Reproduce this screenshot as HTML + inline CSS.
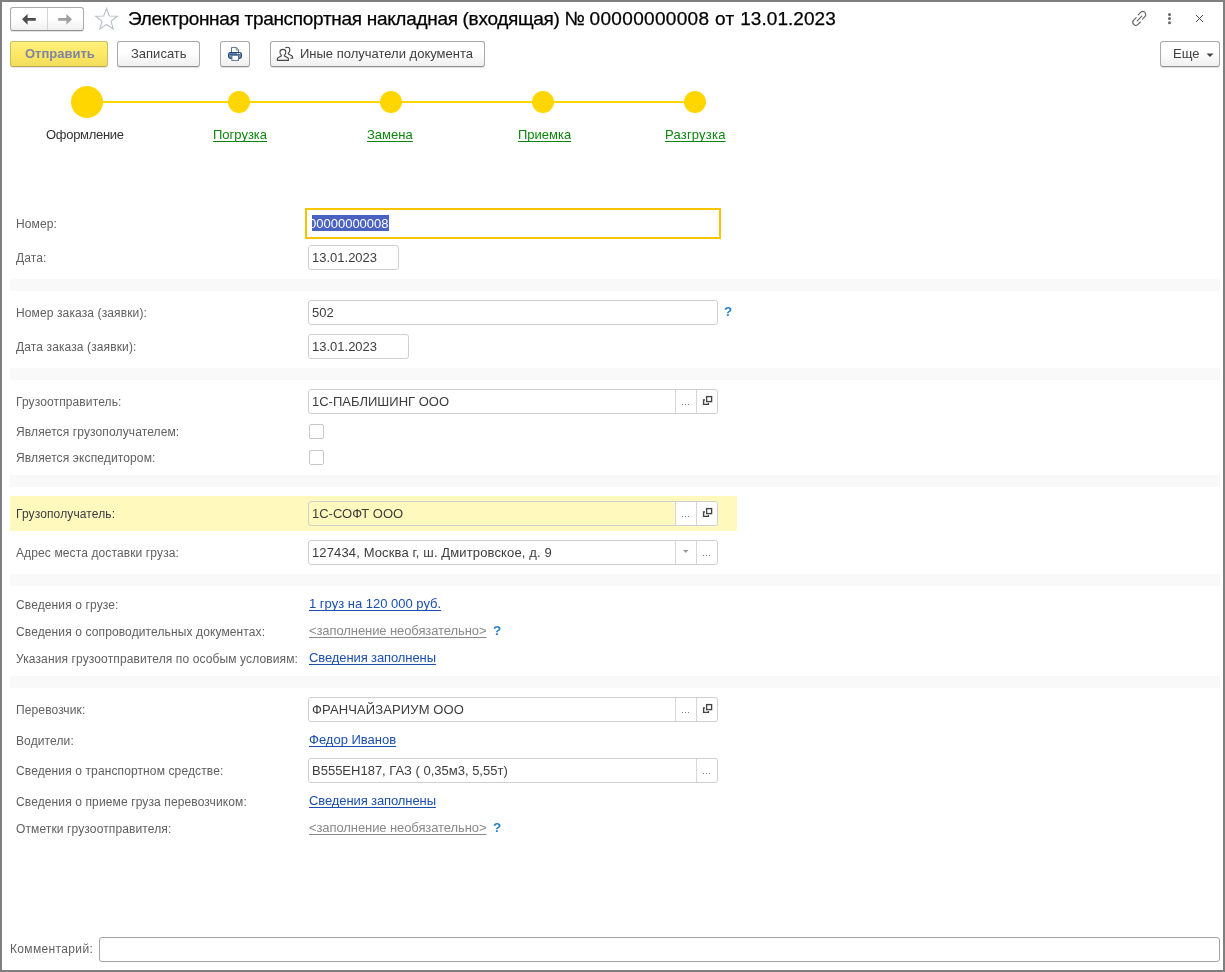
<!DOCTYPE html>
<html><head><meta charset="utf-8">
<style>
*{box-sizing:border-box;margin:0;padding:0}
html,body{width:1225px;height:972px;overflow:hidden;background:#fff}
body{will-change:transform}
body{position:relative;font-family:"Liberation Sans",sans-serif;color:#4d4d4d}
.a{position:absolute}
.frame{position:absolute;left:0;top:0;width:1225px;height:972px;border:2px solid #7f7f7f;pointer-events:none}
.t12{position:absolute;font-size:12px;line-height:14px;white-space:nowrap;color:#606060;letter-spacing:0.12px}
.t13{position:absolute;font-size:13px;line-height:15px;white-space:nowrap;color:#3d3d3d}
.lnk{color:#1a4fae;text-decoration:underline;text-decoration-skip-ink:none;text-underline-offset:2.4px}
.gl{color:#8a8a8a;text-decoration:underline;text-decoration-skip-ink:none;text-underline-offset:2.4px;letter-spacing:-0.09px}
.green{color:#0d850d;text-decoration:underline;text-decoration-skip-ink:none;text-underline-offset:2.4px}
.band{position:absolute;left:10px;width:1210px;height:12px;background:#f9f9f9}
.fld{position:absolute;border:1px solid #cfcfcf;border-radius:3px;background:#fff}
.btn{position:absolute;top:41px;height:26px;border:1px solid #a9a9a9;border-bottom-color:#8f8f8f;border-radius:3px;background:linear-gradient(#fff 0%,#fff 45%,#efefef 100%);box-shadow:0 1px 0 rgba(0,0,0,0.12)}
.btxt{position:absolute;font-size:13px;line-height:15px;white-space:nowrap;color:#404040}
.q{position:absolute;font-size:13.5px;line-height:16px;font-weight:bold;color:#2a80c6}
.cb{position:absolute;width:15px;height:15px;border:1px solid #c8c8c8;border-radius:2px;background:#fff}
.sb{position:absolute;top:0;bottom:0;border-left:1px solid #d6d6d6}
.dots{position:absolute;font-size:11px;line-height:11px;color:#8a8a8a;letter-spacing:0px}
</style></head><body>

<!-- header nav -->
<div class="a" style="left:10px;top:7px;width:74px;height:24px;border:1px solid #a9a9a9;border-bottom-color:#8f8f8f;border-radius:3px;background:linear-gradient(#fff 0%,#fff 45%,#f0f0f0 100%);box-shadow:0 1px 0 rgba(0,0,0,0.1)"></div>
<div class="a" style="left:47px;top:8px;width:1px;height:22px;background:#d4d4d4"></div>
<svg class="a" style="left:20px;top:13px" width="20" height="14" viewBox="0 0 20 14">
  <path d="M2 6.3 L7.6 1 L7.6 5 L15.8 5 L15.8 7.7 L7.6 7.7 L7.6 11.7 Z" fill="#4d4d4d"/>
</svg>
<svg class="a" style="left:56px;top:13px" width="20" height="14" viewBox="0 0 20 14">
  <path d="M16 6.3 L10.4 1 L10.4 5 L2.2 5 L2.2 7.7 L10.4 7.7 L10.4 11.7 Z" fill="#a0a0a0"/>
</svg>
<svg class="a" style="left:94px;top:7px" width="25" height="24" viewBox="0 0 25 24">
  <path d="M12.5 1.5 L15.3 9 L23.3 9.2 L17 14.2 L19.2 22 L12.5 17.5 L5.8 22 L8 14.2 L1.7 9.2 L9.7 9 Z" fill="none" stroke="#b9c1c9" stroke-width="1.1" stroke-linejoin="miter"/>
</svg>
<div class="a" style="left:128px;top:8px;font-size:19px;line-height:22px;color:#000;white-space:nowrap;-webkit-text-stroke:0.25px #000"><span style="letter-spacing:-0.305px">Электронная транспортная накладная (входящая) </span><span style="letter-spacing:-0.35px">№ </span><span style="letter-spacing:0.33px">00000000008</span><span style="letter-spacing:0.35px"> от </span><span style="letter-spacing:0.05px">13.01.2023</span></div>

<!-- link icon -->
<svg class="a" style="left:1130px;top:9px" width="19" height="19" viewBox="0 0 19 19">
  <g fill="none" stroke="#666" stroke-width="1.15" stroke-linecap="round">
    <path d="M8.2 5.8 L10.6 3.4 a3 3 0 0 1 4.3 4.3 L12.4 10.2"/>
    <path d="M10.4 13 L8 15.4 a3 3 0 0 1 -4.3 -4.3 L6.2 8.6"/>
    <path d="M7.2 11.8 L11.8 7.2"/>
  </g>
</svg>
<svg class="a" style="left:1166px;top:12px" width="8" height="14" viewBox="0 0 8 14">
  <circle cx="3.5" cy="2.4" r="1.5" fill="#666"/><circle cx="3.5" cy="6.55" r="1.5" fill="#666"/><circle cx="3.5" cy="10.7" r="1.5" fill="#666"/>
</svg>
<svg class="a" style="left:1194px;top:13px" width="11" height="11" viewBox="0 0 11 11">
  <path d="M2 2 L9 9 M9 2 L2 9" stroke="#4a4a4a" stroke-width="1"/>
</svg>

<!-- toolbar -->
<div class="a" style="left:10px;top:41px;width:98px;height:26px;border:1px solid #cbbd62;border-bottom-color:#b8aa55;border-radius:3px;background:linear-gradient(#fff07f 0%,#fde865 50%,#f1dd5c 100%);box-shadow:0 1px 0 rgba(0,0,60,0.1)"></div>
<div class="btxt" style="left:25px;top:46px;font-weight:bold;color:#8084a2">Отправить</div>

<div class="btn" style="left:117px;width:83px"></div>
<div class="btxt" style="left:131px;top:46px">Записать</div>

<div class="btn" style="left:220px;width:30px"></div>
<svg class="a" style="left:222px;top:42px" width="26" height="24" viewBox="0 0 26 24">
  <path d="M9.5 10.2 V5.4 H14.2 L16.6 7.9 V10.2" fill="#fff" stroke="#5b708c" stroke-width="1"/>
  <path d="M14.2 5.4 V8 H16.6" fill="none" stroke="#5b708c" stroke-width="0.8"/>
  <rect x="6.6" y="10.6" width="12.8" height="5.8" rx="1.8" fill="#7099c6" stroke="#21497a" stroke-width="1.2"/>
  <line x1="8" y1="12.6" x2="18" y2="12.6" stroke="#2d4f78" stroke-width="0.9"/>
  <rect x="15.1" y="11" width="1.1" height="1.1" fill="#fff"/><rect x="17" y="11" width="1.1" height="1.1" fill="#fff"/>
  <rect x="9.9" y="13.3" width="6.6" height="5.1" fill="#fff" stroke="#5b708c" stroke-width="1"/>
</svg>

<div class="btn" style="left:270px;width:215px"></div>
<svg class="a" style="left:272px;top:42px" width="28" height="24" viewBox="0 0 28 24">
  <g fill="none" stroke="#484848" stroke-width="1.15" stroke-linejoin="round">
    <path d="M9.4 13.3 C8.3 12.5 7.9 11.2 8 9.6 C8.1 8.1 9.3 7.4 10.9 7.4 C12.5 7.4 13.7 8.1 13.8 9.6 C13.9 11.2 13.5 12.5 12.4 13.3 L12.4 13.9 L15.4 15.5 C16.2 16 16.5 16.7 16.5 17.4 L16.5 18.3 L5.3 18.3 L5.3 17.4 C5.3 16.7 5.6 16 6.4 15.5 L9.4 13.9 Z"/>
    <path d="M13.3 6.1 C13.9 5.5 14.6 5.2 15.4 5.2 C17 5.2 17.9 6.2 17.9 7.8 C17.9 9.3 17.5 10.5 16.3 11.3 L16.3 11.9 L19.4 13.5 C20.3 14 20.7 14.7 20.7 15.4 L20.7 16.2 L18.3 16.2"/>
  </g>
</svg>
<div class="btxt" style="left:300px;top:46px">Иные получатели документа</div>

<div class="btn" style="left:1160px;width:60px"></div>
<div class="btxt" style="left:1173px;top:46px">Еще</div>
<svg class="a" style="left:1206px;top:53px" width="8" height="5" viewBox="0 0 8 5"><path d="M0.5 0.5 H7.5 L4 4 Z" fill="#444"/></svg>

<!-- stepper -->
<div class="a" style="left:87px;top:101px;width:608px;height:2px;background:#ffd600"></div>
<div class="a" style="left:71px;top:86px;width:32px;height:32px;border-radius:50%;background:#ffd600"></div>
<div class="a" style="left:228px;top:91px;width:22px;height:22px;border-radius:50%;background:#ffd600"></div>
<div class="a" style="left:380px;top:91px;width:22px;height:22px;border-radius:50%;background:#ffd600"></div>
<div class="a" style="left:532px;top:91px;width:22px;height:22px;border-radius:50%;background:#ffd600"></div>
<div class="a" style="left:684px;top:91px;width:22px;height:22px;border-radius:50%;background:#ffd600"></div>
<div class="t13" style="left:46px;top:127px;color:#333;letter-spacing:-0.3px">Оформление</div>
<div class="t13 green" style="left:213px;top:127px">Погрузка</div>
<div class="t13 green" style="left:367px;top:127px">Замена</div>
<div class="t13 green" style="left:518px;top:127px">Приемка</div>
<div class="t13 green" style="left:665px;top:127px;letter-spacing:0.2px">Разгрузка</div>

<!-- form -->
<div class="t12" style="left:16px;top:217px">Номер:</div>
<div class="a" style="left:305px;top:208px;width:416px;height:31px;border:2px solid #f7c400"></div>
<div class="a" style="left:312px;top:215px;width:77px;height:16px;background:#4a62c2"></div>
<div class="t13" style="left:309px;top:216px;color:#fff;clip-path:inset(0 0 0 3px)">00000000008</div>

<div class="t12" style="left:16px;top:251px">Дата:</div>
<div class="fld" style="left:308px;top:245px;width:91px;height:25px"></div>
<div class="t13" style="left:312px;top:250px">13.01.2023</div>

<div class="band" style="top:279px"></div>

<div class="t12" style="left:16px;top:306px">Номер заказа (заявки):</div>
<div class="fld" style="left:308px;top:300px;width:410px;height:25px"></div>
<div class="t13" style="left:312px;top:305px">502</div>
<div class="q" style="left:724px;top:304px">?</div>

<div class="t12" style="left:16px;top:340px">Дата заказа (заявки):</div>
<div class="fld" style="left:308px;top:334px;width:101px;height:25px"></div>
<div class="t13" style="left:312px;top:339px">13.01.2023</div>

<div class="band" style="top:368px"></div>

<div class="t12" style="left:16px;top:395px">Грузоотправитель:</div>
<div class="fld" style="left:308px;top:389px;width:410px;height:25px">
  <div class="sb" style="left:366px"></div><div class="sb" style="left:387px"></div>
</div>
<div class="t13" style="left:312px;top:394px">1С-ПАБЛИШИНГ ООО</div>

<div class="t12" style="left:16px;top:425px">Является грузополучателем:</div>
<div class="cb" style="left:309px;top:424px"></div>
<div class="t12" style="left:16px;top:451px">Является экспедитором:</div>
<div class="cb" style="left:309px;top:450px"></div>

<div class="band" style="top:475px"></div>

<div class="a" style="left:10px;top:496px;width:727px;height:35px;background:#fff9be"></div>
<div class="t12" style="left:16px;top:507px;color:#3a3a44">Грузополучатель:</div>
<div class="fld" style="left:308px;top:501px;width:410px;height:25px;background:transparent;border-color:#d0d0d0">
  <div class="a" style="left:366px;top:0;width:42px;height:23px;background:#fff;border-radius:0 2px 2px 0"></div>
  <div class="sb" style="left:366px"></div><div class="sb" style="left:387px"></div>
</div>
<div class="t13" style="left:312px;top:506px">1С-СОФТ ООО</div>

<div class="t12" style="left:16px;top:546px">Адрес места доставки груза:</div>
<div class="fld" style="left:308px;top:540px;width:410px;height:25px">
  <div class="sb" style="left:366px"></div><div class="sb" style="left:387px"></div>
</div>
<div class="t13" style="left:312px;top:545px;letter-spacing:0.13px">127434, Москва г, ш. Дмитровское, д. 9</div>

<div class="band" style="top:574px"></div>

<div class="t12" style="left:16px;top:598px">Сведения о грузе:</div>
<div class="t13 lnk" style="left:309px;top:596px">1 груз на 120 000 руб.</div>
<div class="t12" style="left:16px;top:625px">Сведения о сопроводительных документах:</div>
<div class="t13 gl" style="left:309px;top:623px">&lt;заполнение необязательно&gt;</div>
<div class="q" style="left:493px;top:623px">?</div>
<div class="t12" style="left:16px;top:652px">Указания грузоотправителя по особым условиям:</div>
<div class="t13 lnk" style="left:309px;top:650px;letter-spacing:-0.1px">Сведения заполнены</div>

<div class="band" style="top:676px"></div>

<div class="t12" style="left:16px;top:703px">Перевозчик:</div>
<div class="fld" style="left:308px;top:697px;width:410px;height:25px">
  <div class="sb" style="left:366px"></div><div class="sb" style="left:387px"></div>
</div>
<div class="t13" style="left:312px;top:702px;letter-spacing:0.12px">ФРАНЧАЙЗАРИУМ ООО</div>

<div class="t12" style="left:16px;top:734px">Водители:</div>
<div class="t13 lnk" style="left:309px;top:732px">Федор Иванов</div>

<div class="t12" style="left:16px;top:764px">Сведения о транспортном средстве:</div>
<div class="fld" style="left:308px;top:758px;width:410px;height:25px">
  <div class="sb" style="left:387px"></div>
</div>
<div class="t13" style="left:312px;top:763px">В555ЕН187, ГАЗ ( 0,35м3, 5,55т)</div>

<div class="t12" style="left:16px;top:795px">Сведения о приеме груза перевозчиком:</div>
<div class="t13 lnk" style="left:309px;top:793px;letter-spacing:-0.1px">Сведения заполнены</div>
<div class="t12" style="left:16px;top:822px">Отметки грузоотправителя:</div>
<div class="t13 gl" style="left:309px;top:820px">&lt;заполнение необязательно&gt;</div>
<div class="q" style="left:493px;top:820px">?</div>

<div class="t12" style="left:10px;top:942px;letter-spacing:0.35px">Комментарий:</div>
<div class="fld" style="left:99px;top:937px;width:1121px;height:25px;border-color:#a3a3a3"></div>

<svg class="a" style="left:682px;top:404px" width="8" height="2" viewBox="0 0 8 2"><rect x="0" y="0" width="1" height="1" fill="#7a7a7a"/><rect x="3" y="0" width="1" height="1" fill="#7a7a7a"/><rect x="6" y="0" width="1" height="1" fill="#7a7a7a"/></svg><svg class="a" style="left:702px;top:395px" width="12" height="12" viewBox="0 0 12 12"><rect x="4.6" y="1.6" width="5" height="5" fill="none" stroke="#444" stroke-width="1.35"/><path d="M3 4.8 H1.6 V9.4 H6.4 V8" fill="none" stroke="#444" stroke-width="1.35"/></svg><svg class="a" style="left:682px;top:516px" width="8" height="2" viewBox="0 0 8 2"><rect x="0" y="0" width="1" height="1" fill="#7a7a7a"/><rect x="3" y="0" width="1" height="1" fill="#7a7a7a"/><rect x="6" y="0" width="1" height="1" fill="#7a7a7a"/></svg><svg class="a" style="left:702px;top:507px" width="12" height="12" viewBox="0 0 12 12"><rect x="4.6" y="1.6" width="5" height="5" fill="none" stroke="#444" stroke-width="1.35"/><path d="M3 4.8 H1.6 V9.4 H6.4 V8" fill="none" stroke="#444" stroke-width="1.35"/></svg><svg class="a" style="left:682px;top:712px" width="8" height="2" viewBox="0 0 8 2"><rect x="0" y="0" width="1" height="1" fill="#7a7a7a"/><rect x="3" y="0" width="1" height="1" fill="#7a7a7a"/><rect x="6" y="0" width="1" height="1" fill="#7a7a7a"/></svg><svg class="a" style="left:702px;top:703px" width="12" height="12" viewBox="0 0 12 12"><rect x="4.6" y="1.6" width="5" height="5" fill="none" stroke="#444" stroke-width="1.35"/><path d="M3 4.8 H1.6 V9.4 H6.4 V8" fill="none" stroke="#444" stroke-width="1.35"/></svg><svg class="a" style="left:683px;top:550px" width="6" height="4" viewBox="0 0 6 4"><path d="M0 0 H5.5 L2.75 3 Z" fill="#999"/></svg><svg class="a" style="left:703px;top:555px" width="8" height="2" viewBox="0 0 8 2"><rect x="0" y="0" width="1" height="1" fill="#7a7a7a"/><rect x="3" y="0" width="1" height="1" fill="#7a7a7a"/><rect x="6" y="0" width="1" height="1" fill="#7a7a7a"/></svg><svg class="a" style="left:703px;top:773px" width="8" height="2" viewBox="0 0 8 2"><rect x="0" y="0" width="1" height="1" fill="#7a7a7a"/><rect x="3" y="0" width="1" height="1" fill="#7a7a7a"/><rect x="6" y="0" width="1" height="1" fill="#7a7a7a"/></svg>
<div class="frame"></div>
</body></html>
